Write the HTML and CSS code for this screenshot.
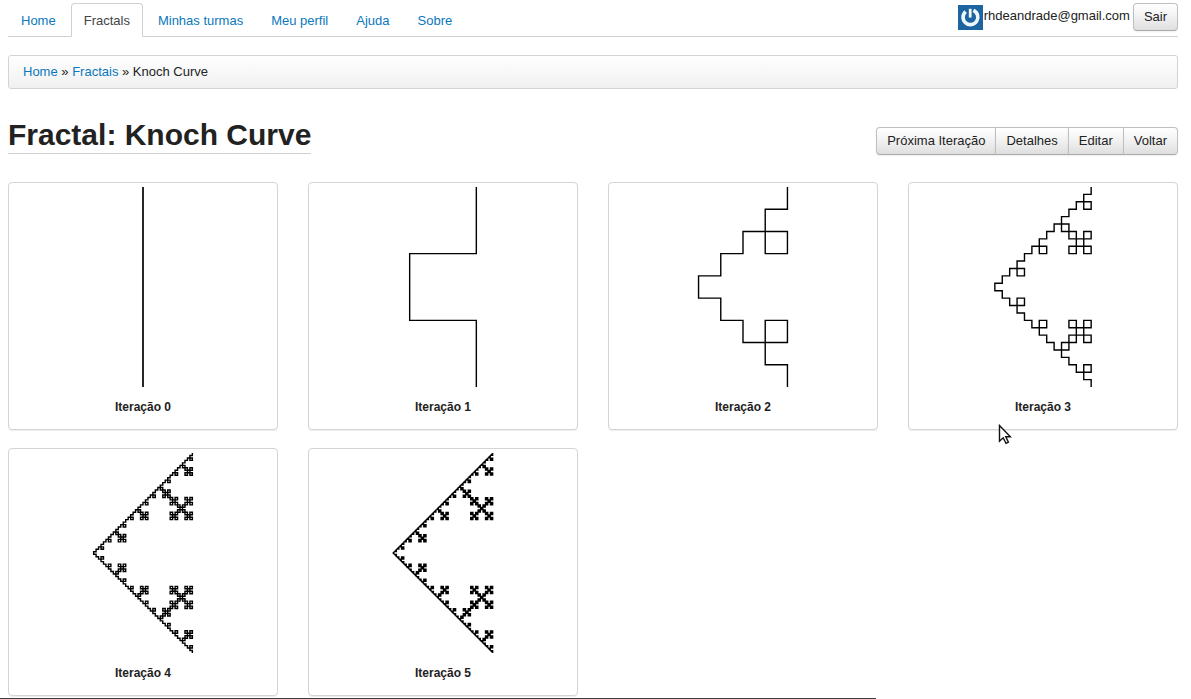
FILE: index.html
```
<!DOCTYPE html>
<html lang="pt-BR">
<head>
<meta charset="utf-8">
<title>Fractal: Knoch Curve</title>
<link rel="stylesheet" href="styles.css">
</head>
<body>
<header class="topbar">
  <nav class="tabs">
    <a class="tab" href="#">Home</a>
    <a class="tab tab-active" href="#">Fractals</a>
    <a class="tab" href="#">Minhas turmas</a>
    <a class="tab" href="#">Meu perfil</a>
    <a class="tab" href="#">Ajuda</a>
    <a class="tab" href="#">Sobre</a>
  </nav>
  <div class="user">
    <svg class="avatar" viewBox="0 0 25 25" aria-hidden="true">
      <rect width="25" height="25" fill="#1e64a0"/>
      <path d="M7.6 6.6A7.4 7.4 0 1 0 15.4 5.4" fill="none" stroke="#eef9fc" stroke-width="3.6"/>
      <path d="M12.2 3.8V12.6" fill="none" stroke="#eef9fc" stroke-width="2.8"/>
    </svg>
    <span class="email">rhdeandrade@gmail.com</span>
    <button class="btn" type="button">Sair</button>
  </div>
</header>

<nav class="breadcrumb"><a href="#">Home</a> » <a href="#">Fractais</a> » <span>Knoch Curve</span></nav>

<main>
  <div class="heading">
    <h1 class="title">Fractal: Knoch Curve</h1>
    <div class="btn-group">
      <button class="btn" type="button">Próxima Iteração</button>
      <button class="btn" type="button">Detalhes</button>
      <button class="btn" type="button">Editar</button>
      <button class="btn" type="button">Voltar</button>
    </div>
  </div>
  <div class="cards">
    <figure class="card"><svg class="curve curve-bold" viewBox="0 0 260 200"><path/></svg><figcaption class="caption">Iteração 0</figcaption></figure>
    <figure class="card"><svg class="curve" viewBox="0 0 260 200"><path/></svg><figcaption class="caption">Iteração 1</figcaption></figure>
    <figure class="card"><svg class="curve" viewBox="0 0 260 200"><path/></svg><figcaption class="caption">Iteração 2</figcaption></figure>
    <figure class="card"><svg class="curve" viewBox="0 0 260 200"><path/></svg><figcaption class="caption">Iteração 3</figcaption></figure>
    <figure class="card"><svg class="curve" viewBox="0 0 260 200"><path/></svg><figcaption class="caption">Iteração 4</figcaption></figure>
    <figure class="card"><svg class="curve curve-fine" viewBox="0 0 260 200"><path/></svg><figcaption class="caption">Iteração 5</figcaption></figure>
  </div>
</main>

<div class="status-edge"></div>
<svg class="pointer" viewBox="0 0 14 21" aria-hidden="true">
  <path d="M1.5 1.5V17.2L5.2 13.8L8 19.3L10.4 18.1L7.8 12.8H12.4Z" fill="#fff" stroke="#111" stroke-width="1.4"/>
</svg>
<script src="curve.js"></script>
</body>
</html>
```
FILE: styles.css
```
* { box-sizing: border-box; }
body {
  margin: 0;
  padding: 3px 13px 0 8px;
  min-height: 100vh;
  overflow: hidden;
  background: #fff;
  color: #222;
  font: 13px/18px "Liberation Sans", Arial, sans-serif;
}
a { color: #0a78bd; text-decoration: none; }

.topbar {
  display: flex;
  justify-content: space-between;
  align-items: flex-start;
  margin-bottom: 18px;
  border-bottom: 1px solid #d0d0d0;
}
.tabs { display: flex; gap: 2px; margin-bottom: -1px; }
.tab {
  padding: 8px 12px 6px;
  border: 1px solid transparent;
  border-radius: 4px 4px 0 0;
}
.tab-active {
  border-color: #d0d0d0;
  border-bottom-color: #fff;
  background: #fff;
  color: #444;
}
.user { display: flex; align-items: center; }
.avatar { width: 25px; height: 25px; margin-right: 1px; }
.email { margin-right: 3px; padding-bottom: 2px; }

.btn {
  padding: 4px 10px;
  border: 1px solid #bfbfbf;
  border-bottom-color: #a8a8a8;
  border-radius: 4px;
  background: linear-gradient(#fff, #f4f4f4 40%, #dfdfdf);
  box-shadow: 0 1px 2px rgba(0, 0, 0, 0.06);
  color: #222;
  font: inherit;
}
.btn-group { display: flex; padding-top: 10px; }
.btn-group .btn { border-radius: 0; }
.btn-group .btn + .btn { margin-left: -1px; }
.btn-group .btn:first-child { border-radius: 4px 0 0 4px; }
.btn-group .btn:last-child { border-radius: 0 4px 4px 0; }

.breadcrumb {
  margin-bottom: 28px;
  padding: 7px 14px;
  border: 1px solid #d4d4d4;
  border-radius: 3px;
  background: linear-gradient(#fff, #f0f0f0);
}

.heading {
  display: flex;
  justify-content: space-between;
  align-items: flex-start;
  margin-bottom: 27px;
}
.title {
  margin: 0;
  border-bottom: 1px solid #d0d0d0;
  font-size: 30px;
  line-height: 36px;
}

.cards {
  display: grid;
  grid-template-columns: repeat(4, 1fr);
  gap: 18px 30px;
}
.card {
  margin: 0;
  padding: 4px;
  border: 1px solid #d4d4d4;
  border-radius: 4px;
  box-shadow: 0 1px 1px rgba(0, 0, 0, 0.07);
  text-align: center;
}
.curve { display: block; width: 100%; fill: none; stroke: #000; stroke-width: 1.4; }
.curve-bold { stroke-width: 1.7; }
.curve-fine { stroke-width: 1.1; }
.caption { padding: 11px 0 9px; font-size: 12px; font-weight: bold; }

.status-edge {
  position: fixed;
  left: 0;
  bottom: 0;
  width: 876px;
  height: 1px;
  background: #3c3c3c;
}
.pointer {
  position: absolute;
  left: 998px;
  top: 424px;
  width: 14px;
  height: 21px;
}
```
FILE: curve.js
```
// Each segment becomes F R F L F L F R F, every piece a third as long.
function turns(depth) {
  if (depth === 0) return "F";
  const f = turns(depth - 1);
  return f + "R" + f + "L" + f + "L" + f + "R" + f;
}

document.querySelectorAll(".curve path").forEach((path, depth) => {
  const step = 200 / 3 ** depth;
  let dx = 0, dy = 1, x = 0, y = 0;
  const points = [[0, 0]];
  for (const c of turns(depth)) {
    if (c === "F") {
      x += dx;
      y += dy;
      points.push([x, y]);
    } else if (c === "R") {
      [dx, dy] = [-dy, dx];
    } else {
      [dx, dy] = [dy, -dx];
    }
  }
  const left = Math.min(...points.map(p => p[0]));
  const startX = 130 - left * step / 2;
  path.setAttribute("d", "M" + points.map(p =>
    (startX + p[0] * step).toFixed(3) + " " + (p[1] * step).toFixed(3)).join("L"));
});
```
